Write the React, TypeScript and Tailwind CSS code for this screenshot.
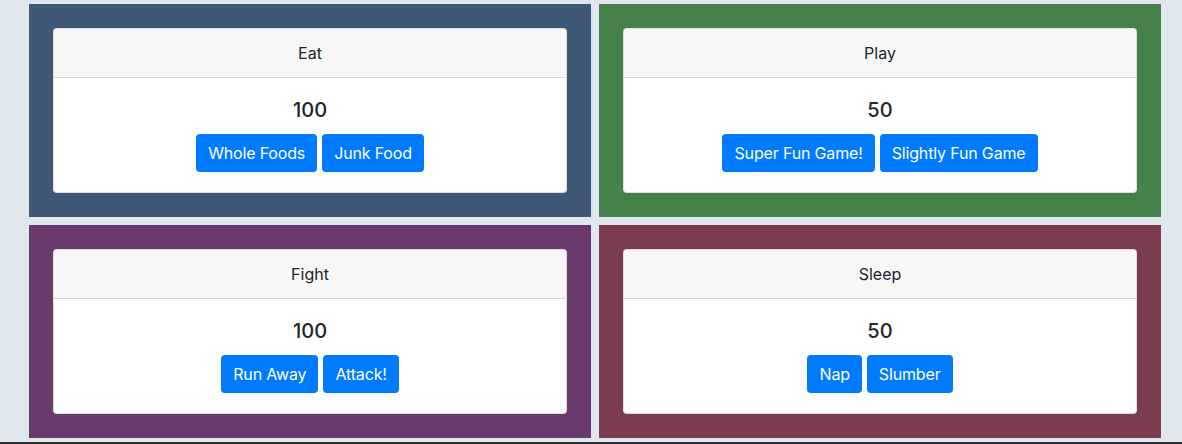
const stats = [
  { title: "Eat", value: 100, bg: "bg-[#3e5875]", actions: ["Whole Foods", "Junk Food"] },
  { title: "Play", value: 50, bg: "bg-[#46804b]", actions: ["Super Fun Game!", "Slightly Fun Game"] },
  { title: "Fight", value: 100, bg: "bg-[#6a3a6c]", actions: ["Run Away", "Attack!"] },
  { title: "Sleep", value: 50, bg: "bg-[#7b3c50]", actions: ["Nap", "Slumber"] },
];

const StatCard = ({ title, value, bg, actions }: (typeof stats)[number]) => {
  return (
    <div className={`${bg} h-[213px] p-6`}>
      <div className="bg-white border border-black/[0.125] rounded overflow-hidden">
        <div className="bg-[#f7f7f7] border-b border-black/[0.125] px-5 py-3 text-center text-base leading-6 text-[#212529]">
          {title}
        </div>
        <div className="flex flex-col items-center gap-3 p-5">
          <div className="text-xl leading-6 font-medium text-[#212529]">{value}</div>
          <div className="flex gap-[5px]">
            {actions.map((a) => (
              <button
                key={a}
                className="bg-[#007bff] text-white text-base leading-6 tracking-[-0.01em] px-3 py-[7px] rounded"
              >
                {a}
              </button>
            ))}
          </div>
        </div>
      </div>
    </div>
  );
};

const App = () => {
  return (
    <div className="bg-[#dfe6ec] h-[444px] flex flex-col font-['Inter',sans-serif]">
      <div className="pl-[29px] pr-[21px] pt-1 grid grid-cols-2 gap-2">
        {stats.map((s) => (
          <StatCard key={s.title} {...s} />
        ))}
      </div>
      <div className="mt-auto h-[2px] bg-[#2f3336]" />
    </div>
  );
};

export default App;
